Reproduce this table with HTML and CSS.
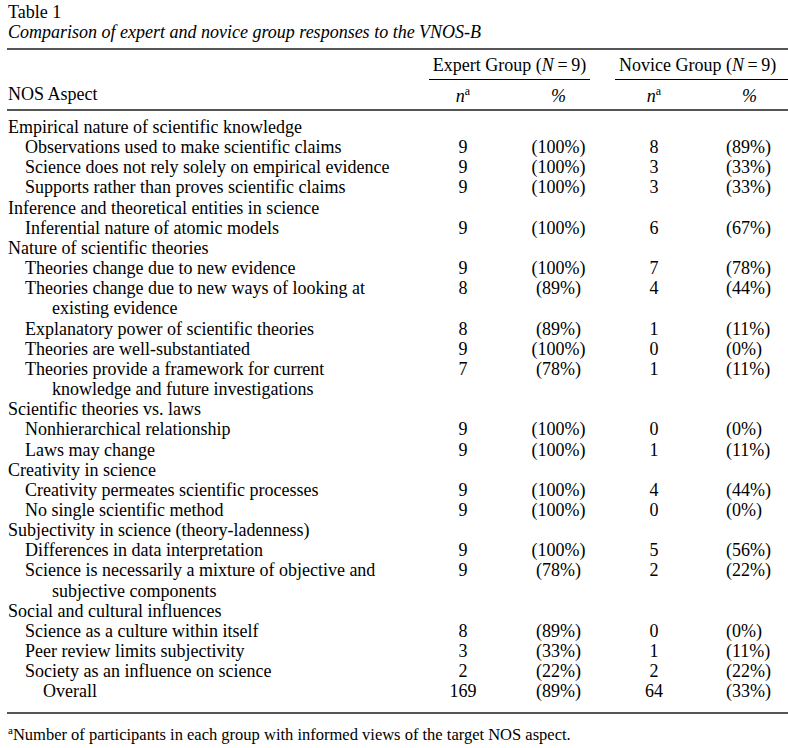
FILE: index.html
```html
<!DOCTYPE html>
<html lang="en">
<head>
<meta charset="utf-8">
<title>Table 1</title>
<link rel="stylesheet" href="styles.css">
</head>
<body>
<div class="page">
  <div class="title">Table 1</div>
  <div class="caption">Comparison of expert and novice group responses to the VNOS-B</div>
  <table class="data">
    <colgroup>
      <col class="c-label"><col class="c-n1"><col class="c-p1"><col class="c-n2"><col class="c-p2">
    </colgroup>
    <thead>
      <tr class="group-row">
        <th class="aspect" rowspan="2">NOS Aspect</th>
        <th colspan="2" class="group"><div class="group-in expert">Expert Group (<i>N</i>&#8201;=&#8201;9)</div></th>
        <th colspan="2" class="group"><div class="group-in novice">Novice Group (<i>N</i>&#8201;=&#8201;9)</div></th>
      </tr>
      <tr class="sub-row">
        <th class="num"><i>n</i><sup>a</sup></th>
        <th class="pct1"><i>%</i></th>
        <th class="num"><i>n</i><sup>a</sup></th>
        <th class="pct2"><i>%</i></th>
      </tr>
    </thead>
    <tbody>
      <tr class="first"><td class="cat" colspan="5">Empirical nature of scientific knowledge</td></tr>
      <tr><td class="item">Observations used to make scientific claims</td><td class="num">9</td><td class="pct1">(100%)</td><td class="num">8</td><td class="pct2">(89%)</td></tr>
      <tr><td class="item">Science does not rely solely on empirical evidence</td><td class="num">9</td><td class="pct1">(100%)</td><td class="num">3</td><td class="pct2">(33%)</td></tr>
      <tr><td class="item">Supports rather than proves scientific claims</td><td class="num">9</td><td class="pct1">(100%)</td><td class="num">3</td><td class="pct2">(33%)</td></tr>
      <tr><td class="cat" colspan="5">Inference and theoretical entities in science</td></tr>
      <tr><td class="item">Inferential nature of atomic models</td><td class="num">9</td><td class="pct1">(100%)</td><td class="num">6</td><td class="pct2">(67%)</td></tr>
      <tr><td class="cat" colspan="5">Nature of scientific theories</td></tr>
      <tr><td class="item">Theories change due to new evidence</td><td class="num">9</td><td class="pct1">(100%)</td><td class="num">7</td><td class="pct2">(78%)</td></tr>
      <tr><td class="item">Theories change due to new ways of looking at existing evidence</td><td class="num">8</td><td class="pct1">(89%)</td><td class="num">4</td><td class="pct2">(44%)</td></tr>
      <tr><td class="item">Explanatory power of scientific theories</td><td class="num">8</td><td class="pct1">(89%)</td><td class="num">1</td><td class="pct2">(11%)</td></tr>
      <tr><td class="item">Theories are well-substantiated</td><td class="num">9</td><td class="pct1">(100%)</td><td class="num">0</td><td class="pct2">(0%)</td></tr>
      <tr><td class="item">Theories provide a framework for current knowledge and future investigations</td><td class="num">7</td><td class="pct1">(78%)</td><td class="num">1</td><td class="pct2">(11%)</td></tr>
      <tr><td class="cat" colspan="5">Scientific theories vs. laws</td></tr>
      <tr><td class="item">Nonhierarchical relationship</td><td class="num">9</td><td class="pct1">(100%)</td><td class="num">0</td><td class="pct2">(0%)</td></tr>
      <tr><td class="item">Laws may change</td><td class="num">9</td><td class="pct1">(100%)</td><td class="num">1</td><td class="pct2">(11%)</td></tr>
      <tr><td class="cat" colspan="5">Creativity in science</td></tr>
      <tr><td class="item">Creativity permeates scientific processes</td><td class="num">9</td><td class="pct1">(100%)</td><td class="num">4</td><td class="pct2">(44%)</td></tr>
      <tr><td class="item">No single scientific method</td><td class="num">9</td><td class="pct1">(100%)</td><td class="num">0</td><td class="pct2">(0%)</td></tr>
      <tr><td class="cat" colspan="5">Subjectivity in science (theory-ladenness)</td></tr>
      <tr><td class="item">Differences in data interpretation</td><td class="num">9</td><td class="pct1">(100%)</td><td class="num">5</td><td class="pct2">(56%)</td></tr>
      <tr><td class="item">Science is necessarily a mixture of objective and subjective components</td><td class="num">9</td><td class="pct1">(78%)</td><td class="num">2</td><td class="pct2">(22%)</td></tr>
      <tr><td class="cat" colspan="5">Social and cultural influences</td></tr>
      <tr><td class="item">Science as a culture within itself</td><td class="num">8</td><td class="pct1">(89%)</td><td class="num">0</td><td class="pct2">(0%)</td></tr>
      <tr><td class="item">Peer review limits subjectivity</td><td class="num">3</td><td class="pct1">(33%)</td><td class="num">1</td><td class="pct2">(11%)</td></tr>
      <tr><td class="item">Society as an influence on science</td><td class="num">2</td><td class="pct1">(22%)</td><td class="num">2</td><td class="pct2">(22%)</td></tr>
      <tr class="last"><td class="overall">Overall</td><td class="num">169</td><td class="pct1">(89%)</td><td class="num">64</td><td class="pct2">(33%)</td></tr>
    </tbody>
  </table>
  <div class="note"><sup>a</sup>Number of participants in each group with informed views of the target NOS aspect.</div>
</div>
</body>
</html>
```

FILE: styles.css
```css
html, body {
  margin: 0;
  padding: 0;
  background: #fff;
}
body {
  font-family: "Liberation Serif", "Times New Roman", serif;
  font-size: 18px;
  color: #000;
}
.page {
  padding: 2px 0 0 7px;
  width: 781px;
}
.title {
  line-height: 20px;
  padding-left: 1px;
}
.caption {
  font-style: italic;
  line-height: 20px;
  padding-left: 1px;
}
.data {
  width: 781px;
  margin-top: 6px;
  border-collapse: collapse;
  table-layout: fixed;
  border-top: 2px solid #555;
  border-bottom: 2px solid #555;
}
.c-label { width: 422px; }
.c-n1 { width: 68px; }
.c-p1 { width: 118px; }
.c-n2 { width: 78px; }
.c-p2 { width: 95px; }

th {
  font-weight: normal;
  padding: 0;
}
td {
  padding: 0;
  line-height: 20.15px;
  vertical-align: top;
}
thead tr.sub-row th {
  border-bottom: 2px solid #555;
  padding: 6px 0 3px;
  line-height: 20px;
}
thead tr.sub-row th.pct1 {
  padding-left: 5px;
}
thead tr.sub-row th.pct2 {
  text-align: left;
  padding-left: 49px;
}
.aspect {
  text-align: left;
  vertical-align: bottom;
  padding: 0 0 5px 1px !important;
  border-bottom: 2px solid #555;
  line-height: 20px;
}
.group {
  padding: 5px 0 0;
}
.group-in {
  line-height: 20px;
  padding-bottom: 4px;
  border-bottom: 1px solid #000;
}
.group-in.expert {
  text-align: center;
  margin-right: 25px;
}
.group-in.novice {
  text-align: left;
  padding-left: 4px;
}
sup {
  font-size: 12px;
  vertical-align: 7px;
  line-height: 0;
  font-style: normal;
}
.num {
  text-align: center;
}
.pct1 {
  text-align: center;
  padding-left: 5px;
}
.pct2 {
  text-align: left;
  padding-left: 33px;
}
tbody tr.first td {
  padding-top: 6px;
}
tbody tr.last td {
  padding-bottom: 10px;
}
.cat {
  padding-left: 1px;
}
.item {
  padding-left: 45px;
  padding-right: 22px;
  text-indent: -27px;
}
.overall {
  padding-left: 36px;
}
.note {
  margin-top: 11px;
  line-height: 20px;
  font-size: 16.5px;
  padding-left: 1px;
}
.note sup {
  font-size: 11px;
  vertical-align: 6px;
}
```
